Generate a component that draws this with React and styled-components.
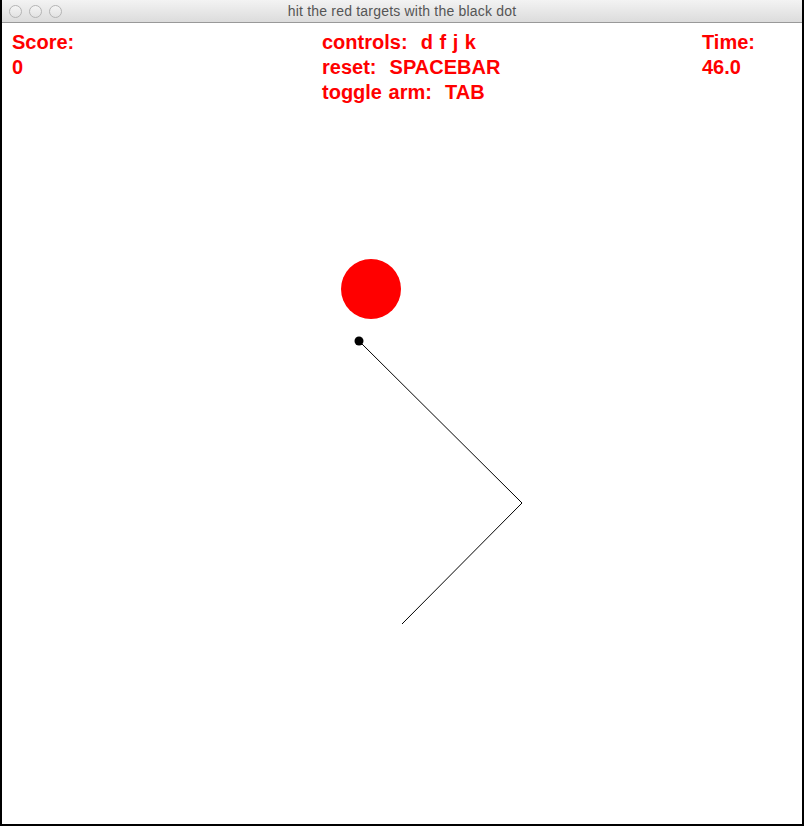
import React from 'react';
import styled, { createGlobalStyle } from 'styled-components';

const Global = createGlobalStyle`
  html, body {
    margin: 0;
    padding: 0;
    background: #ffffff;
  }
`;

const Window = styled.div`
  width: 804px;
  height: 826px;
  box-sizing: border-box;
  display: flex;
  flex-direction: column;
  border: 2px solid #000;
  border-top: none;
  background: #fff;
  overflow: hidden;
`;

const TitleBar = styled.div`
  height: 22px;
  flex-shrink: 0;
  margin: 0 -2px;
  display: flex;
  align-items: center;
  position: relative;
  background: linear-gradient(#f3f3f3, #dcdcdc);
  border-bottom: 1px solid #999;
`;

const Lights = styled.div`
  display: flex;
  gap: 7px;
  padding-left: 9px;
`;

const Light = styled.span`
  width: 11px;
  height: 11px;
  border-radius: 50%;
  border: 1px solid #b4b4b4;
  background: linear-gradient(#f4f4f4, #e2e2e2);
`;

const Title = styled.div`
  position: absolute;
  left: 0;
  right: 0;
  top: 0;
  line-height: 22px;
  text-align: center;
  font-family: "Liberation Sans", Arial, sans-serif;
  font-size: 14px;
  letter-spacing: 0.2px;
  color: #555;
  pointer-events: none;
`;

const Canvas = styled.div`
  flex: 1;
  position: relative;
`;

const Hud = styled.div`
  display: grid;
  grid-template-columns: 310px 380px auto;
  padding: 7px 0 0 10px;
  font-family: "Liberation Sans", Arial, Helvetica, sans-serif;
  font-weight: bold;
  font-size: 20px;
  line-height: 25px;
  word-spacing: 1px;
  color: #ff0000;
  white-space: pre;
`;

const Column = styled.div`
  display: flex;
  flex-direction: column;
`;

const Drawing = styled.svg`
  position: absolute;
  left: 0;
  top: 0;
`;

export default function App() {
  return (
    <>
      <Global />
      <Window>
        <TitleBar>
          <Lights>
            <Light />
            <Light />
            <Light />
          </Lights>
          <Title>hit the red targets with the black dot</Title>
        </TitleBar>
        <Canvas>
          <Hud>
            <Column>
              <span>Score:</span>
              <span>0</span>
            </Column>
            <Column>
              <span>controls:  d f j k</span>
              <span>reset:  SPACEBAR</span>
              <span>toggle arm:  TAB</span>
            </Column>
            <Column>
              <span>Time:</span>
              <span>46.0</span>
            </Column>
          </Hud>
          <Drawing width="800" height="801">
            <circle cx="369" cy="266" r="30" fill="#ff0000" />
            <polyline
              points="357,318 520,480 400,601"
              fill="none"
              stroke="#000"
              strokeWidth="1"
            />
            <circle cx="357" cy="318" r="4.5" fill="#000" />
          </Drawing>
        </Canvas>
      </Window>
    </>
  );
}
